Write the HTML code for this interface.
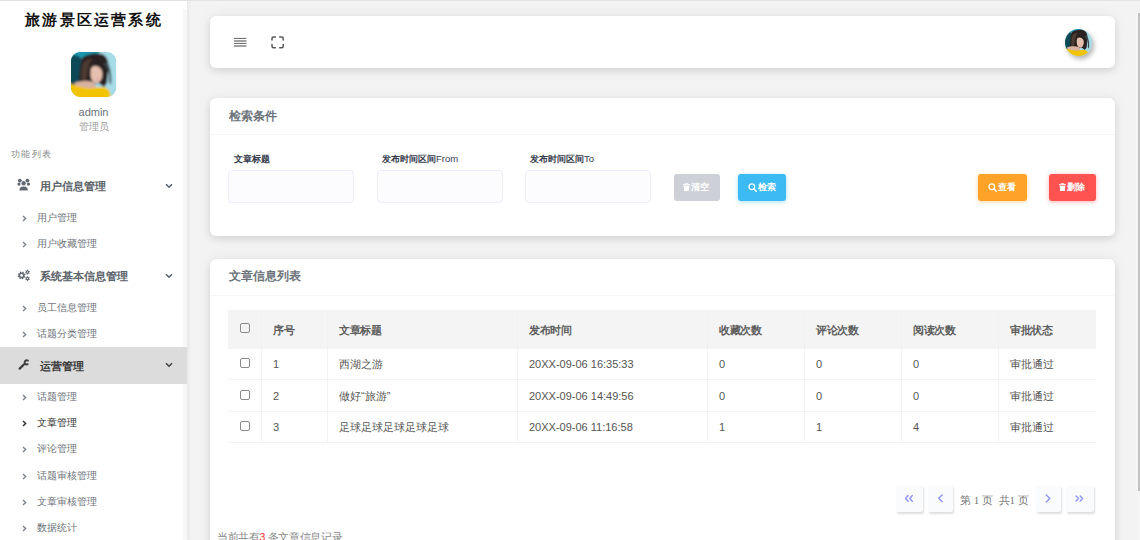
<!DOCTYPE html>
<html><head><meta charset="utf-8">
<style>
*{margin:0;padding:0;box-sizing:border-box}
html,body{width:1140px;height:540px;overflow:hidden}
body{font-family:"Liberation Sans",sans-serif;background:#f3f3f3;position:relative;color:#555}
.abs{position:absolute}
.topline{position:absolute;left:0;top:0;width:1140px;height:1px;background:#e3e3e3;z-index:10}
#side{position:absolute;left:0;top:0;width:187px;height:540px;background:#fff;box-shadow:1px 0 4px rgba(0,0,0,0.07);z-index:2}
#side .track{position:absolute;left:183px;top:9px;width:4px;height:531px;background:#f8f8f8}
.title{position:absolute;left:0;top:10px;width:187px;text-align:center;font-size:15px;font-weight:bold;color:#111;letter-spacing:2.2px;line-height:20px;padding-left:1px}
.avatar{position:absolute;left:71px;top:52px;width:45px;height:45px;border-radius:9px;overflow:hidden}
.uname{position:absolute;left:0;width:187px;text-align:center;top:104.5px;font-size:11px;color:#6c757d;line-height:14px}
.urole{position:absolute;left:0;width:187px;text-align:center;top:120px;font-size:9.6px;color:#9a9a9a;line-height:13px}
.flist{position:absolute;left:10.5px;top:148px;font-size:9px;color:#8a8a8a;letter-spacing:1.5px;line-height:12px}
.mt{position:absolute;left:0;width:187px;height:37px}
.mt.active{background:#dcdcdc}
.mt .ic{position:absolute;left:17px;top:12px;width:13px;height:13px}
.mt .tx{position:absolute;left:40px;top:0;line-height:37px;font-size:11px;font-weight:bold;color:#5c636a}
.mt .chev{position:absolute;left:165px;top:15px;width:8px;height:6px}
.si{position:absolute;left:0;width:187px;height:26px}
.si .ar{position:absolute;left:22px;top:10px;width:5px;height:7px}
.si .tx{position:absolute;left:37px;top:0;line-height:26px;font-size:10px;color:#6d7278}
.si.cur .tx{color:#2e2e2e;font-weight:500}
.card{position:absolute;left:209.5px;width:905.5px;background:#fff;border-radius:6px;box-shadow:0 3px 7px rgba(30,40,50,0.12),0 0 16px rgba(0,0,0,0.05)}
.ctitle{position:absolute;left:19px;font-size:12px;font-weight:bold;color:#6c737a;line-height:16px}
.divider{position:absolute;left:0;width:905px;height:1px;background:#f6f6f6}
.lbl{position:absolute;font-size:9px;font-weight:bold;color:#363c4c;line-height:12px}
.inp{position:absolute;top:170px;width:126px;height:33px;background:#fcfcff;border:1px solid #ececfb;border-radius:4px}
.btn{position:absolute;top:174px;height:27px;border-radius:3px;color:#fff;font-size:9px;font-weight:bold;white-space:nowrap}
.bt{position:absolute;top:0;line-height:27px;font-size:9.3px}
.scroll{position:absolute;left:1137px;top:12px;width:3px;height:528px;background:#f5f5f5}
.thumb{position:absolute;left:1138px;top:13px;width:2px;height:478px;background:#c1c1c1}
table{position:absolute;left:228px;top:310px;border-collapse:collapse;font-size:11px;color:#555}
th{background:#f4f4f4;height:38.5px;text-align:left;font-weight:bold;letter-spacing:-0.3px;padding:0 0 0 11px;border-left:1px solid #f1f1f1;color:#5e5e5e}
td{height:31.4px;padding:0 0 0 11px;border-left:1px solid #f2f2f2;border-bottom:1px solid #f2f2f2}
.c{position:relative;top:1px}
th:first-child,td:first-child{border-left:none}
.cb{display:inline-block;width:10px;height:10px;border:1px solid #8a8a8a;border-radius:2px;vertical-align:middle;position:relative;top:-2px;left:1px}
.pg{position:absolute;top:485.7px;width:26px;height:26px;background:#fafbfd;border-radius:2.5px;box-shadow:1px 1.5px 2px rgba(0,0,0,0.13)}
</style></head>
<body>
<div class="topline"></div>
<div id="side">
  <div class="track"></div>
  <div class="title">旅游景区运营系统</div>
  <div class="avatar">
    <svg width="45" height="45" viewBox="0 0 45 45">
      <defs><filter id="bl1" x="-10%" y="-10%" width="120%" height="120%"><feGaussianBlur stdDeviation="1.1"/></filter></defs>
      <rect width="45" height="45" fill="#a6dbe8"/>
      <g filter="url(#bl1)">
      <rect x="-2" y="-2" width="49" height="49" fill="#a6dbe8"/>
      <path d="M-2 -2 H30 L24 6 H-2Z" fill="#1f98ae"/>
      <path d="M-2 3 C4 2 10 4 13 10 C13 18 11 26 9 34 L-2 34 Z" fill="#0a4a57"/>
      <path d="M11 6 C15 2 24 0.5 31 2 C35 3.5 37.5 8 37.5 13 C37.5 19 36.5 25 36 31 L33 35 C31 33 29 32 27 31 L16 35 L8 33 C8 24 9 14 11 6 Z" fill="#2a2321"/>
      <path d="M12 12 C14 8 18 6 21 7 C17 12 16 20 15 30 L11 32 C10 24 10.5 16 12 12Z" fill="#4d3b32"/>
      <path d="M33 12 C37 16 39 22 38 30 L40 33 C41 24 40 16 36 10Z" fill="#3d4b52"/>
      <path d="M21 15 C24 13 29 14 31 19 C32 24 30.5 29 27 31 C24 32 21 29.5 20 25.5 C19 21 19.5 17 21 15Z" fill="#e6c0ae"/>
      <path d="M3 31 C8 29 16 28 23 30 L26 37 L6 38 Z" fill="#d8b2a0"/>
      <ellipse cx="26.5" cy="27.3" rx="1.5" ry="0.8" fill="#da8c95"/>
      <path d="M-2 31 C6 34 14 37 22 36 C28 35 34 34 38 38 L41 47 H-2 Z" fill="#f2c400"/>
      </g>
    </svg>
  </div>
  <div class="uname">admin</div>
  <div class="urole">管理员</div>
  <div class="flist">功能列表</div>

  <div class="mt" style="top:168px">
    <svg class="ic" style="left:17px;top:10px;width:14px;height:14px" viewBox="0 0 14 14"><g fill="#5f6770"><circle cx="2.9" cy="2.6" r="1.9"/><circle cx="10.4" cy="2.6" r="1.9"/><circle cx="2" cy="6.1" r="1.6"/><circle cx="11.5" cy="6.1" r="1.6"/><circle cx="6.65" cy="5.2" r="2.5" stroke="#fff" stroke-width="0.6"/><path d="M2.3 12.2 C2.3 9.5 3.5 8.3 6.65 8.3 C9.8 8.3 11 9.5 11 12.2 Q11 12.7 10.5 12.7 H2.8 Q2.3 12.7 2.3 12.2Z" stroke="#fff" stroke-width="0.5"/></g></svg>
    <div class="tx">用户信息管理</div>
    <svg class="chev" viewBox="0 0 8 6"><path d="M1 1.2 L4 4.2 L7 1.2" stroke="#59616a" stroke-width="1.6" fill="none"/></svg>
  </div>
  <div class="si" style="top:205px"><svg class="ar" viewBox="0 0 5 7"><path d="M1 1 L3.6 3.5 L1 6" stroke="#7b838c" stroke-width="1.4" fill="none"/></svg><div class="tx">用户管理</div></div>
  <div class="si" style="top:231px"><svg class="ar" viewBox="0 0 5 7"><path d="M1 1 L3.6 3.5 L1 6" stroke="#7b838c" stroke-width="1.4" fill="none"/></svg><div class="tx">用户收藏管理</div></div>

  <div class="mt" style="top:257.5px">
    <svg class="ic" style="left:17px;top:10px;width:14px;height:14px" viewBox="0 0 14 14"><path fill="#5f6770" fill-rule="evenodd" d="M7.54 8.00 L8.40 8.65 L7.92 9.63 L6.87 9.36 L6.26 9.90 L6.40 10.97 L5.37 11.33 L4.82 10.39 L4.00 10.34 L3.35 11.20 L2.37 10.72 L2.64 9.67 L2.10 9.06 L1.03 9.20 L0.67 8.17 L1.61 7.62 L1.66 6.80 L0.80 6.15 L1.28 5.17 L2.33 5.44 L2.94 4.90 L2.80 3.83 L3.83 3.47 L4.38 4.41 L5.20 4.46 L5.850 3.60 L6.83 4.08 L6.56 5.13 L7.10 5.74 L8.17 5.60 L8.53 6.63 L7.59 7.18Z M6.00 7.40 A1.4 1.4 0 1 0 3.20 7.40 A1.4 1.4 0 1 0 6.00 7.40Z M12.12 4.60 L12.65 5.16 L12.13 5.86 L11.45 5.51 L10.88 5.76 L10.66 6.49 L9.79 6.39 L9.75 5.63 L9.25 5.26 L8.51 5.44 L8.16 4.63 L8.80 4.21 L8.88 3.60 L8.35 3.04 L8.87 2.34 L9.55 2.69 L10.12 2.44 L10.34 1.71 L11.21 1.81 L11.25 2.57 L11.75 2.94 L12.49 2.76 L12.84 3.57 L12.20 3.99Z M11.20 4.10 A0.7 0.7 0 1 0 9.80 4.10 A0.7 0.7 0 1 0 11.20 4.10Z M12.19 10.77 L12.82 11.21 L12.45 12.00 L11.71 11.80 L11.20 12.15 L11.13 12.92 L10.26 12.99 L10.07 12.24 L9.51 11.98 L8.81 12.31 L8.31 11.59 L8.86 11.05 L8.81 10.43 L8.18 9.99 L8.55 9.20 L9.29 9.40 L9.80 9.05 L9.87 8.28 L10.74 8.21 L10.93 8.96 L11.49 9.22 L12.19 8.89 L12.69 9.61 L12.14 10.15Z M11.20 10.60 A0.7 0.7 0 1 0 9.80 10.60 A0.7 0.7 0 1 0 11.20 10.60Z"/></svg>
    <div class="tx">系统基本信息管理</div>
    <svg class="chev" viewBox="0 0 8 6"><path d="M1 1.2 L4 4.2 L7 1.2" stroke="#59616a" stroke-width="1.6" fill="none"/></svg>
  </div>
  <div class="si" style="top:294.5px"><svg class="ar" viewBox="0 0 5 7"><path d="M1 1 L3.6 3.5 L1 6" stroke="#7b838c" stroke-width="1.4" fill="none"/></svg><div class="tx">员工信息管理</div></div>
  <div class="si" style="top:320.7px"><svg class="ar" viewBox="0 0 5 7"><path d="M1 1 L3.6 3.5 L1 6" stroke="#7b838c" stroke-width="1.4" fill="none"/></svg><div class="tx">话题分类管理</div></div>

  <div class="mt active" style="top:347px">
    <svg class="ic" style="left:17px;top:10px;width:14px;height:14px" viewBox="0 0 14 14"><path d="M2.7 11.6 L6.9 7.5" stroke="#3d3d3d" stroke-width="2.3" stroke-linecap="round"/><path d="M10.9 3.6 A2.1 2.1 0 1 0 10.7 7.2" stroke="#3d3d3d" stroke-width="1.9" fill="none" stroke-linecap="round"/></svg>
    <div class="tx" style="color:#3a3a3a;top:1px">运营管理</div>
    <svg class="chev" viewBox="0 0 8 6"><path d="M1 1.2 L4 4.2 L7 1.2" stroke="#444" stroke-width="1.6" fill="none"/></svg>
  </div>
  <div class="si" style="top:384px"><svg class="ar" viewBox="0 0 5 7"><path d="M1 1 L3.6 3.5 L1 6" stroke="#7b838c" stroke-width="1.4" fill="none"/></svg><div class="tx">话题管理</div></div>
  <div class="si cur" style="top:410.2px"><svg class="ar" viewBox="0 0 5 7"><path d="M1 1 L3.6 3.5 L1 6" stroke="#333" stroke-width="1.5" fill="none"/></svg><div class="tx">文章管理</div></div>
  <div class="si" style="top:436.4px"><svg class="ar" viewBox="0 0 5 7"><path d="M1 1 L3.6 3.5 L1 6" stroke="#7b838c" stroke-width="1.4" fill="none"/></svg><div class="tx">评论管理</div></div>
  <div class="si" style="top:462.6px"><svg class="ar" viewBox="0 0 5 7"><path d="M1 1 L3.6 3.5 L1 6" stroke="#7b838c" stroke-width="1.4" fill="none"/></svg><div class="tx">话题审核管理</div></div>
  <div class="si" style="top:488.8px"><svg class="ar" viewBox="0 0 5 7"><path d="M1 1 L3.6 3.5 L1 6" stroke="#7b838c" stroke-width="1.4" fill="none"/></svg><div class="tx">文章审核管理</div></div>
  <div class="si" style="top:515px"><svg class="ar" viewBox="0 0 5 7"><path d="M1 1 L3.6 3.5 L1 6" stroke="#7b838c" stroke-width="1.4" fill="none"/></svg><div class="tx">数据统计</div></div>
</div>

<!-- header card -->
<div class="card" style="top:15.5px;height:52.5px">
  <svg class="abs" style="left:24.5px;top:21px" width="13" height="10" viewBox="0 0 13 10"><g fill="#666"><rect x="0" y="0.9" width="12.5" height="1"/><rect x="0" y="3.4" width="12.5" height="1.2"/><rect x="0" y="5.9" width="12.5" height="1"/><rect x="0" y="8.4" width="12.5" height="1.2"/></g></svg>
  <svg class="abs" style="left:61.5px;top:20px" width="14" height="13" viewBox="0 0 14 13"><g stroke="#555" stroke-width="1.5" fill="none" stroke-linecap="round"><path d="M4.3 1 H2.5 Q1 1 1 2.5 V4"/><path d="M8.7 1 H10.7 Q12.2 1 12.2 2.5 V4"/><path d="M1 8.5 V10 Q1 11.8 2.5 11.8 H4.3"/><path d="M12.2 8.5 V10 Q12.2 11.8 10.7 11.8 H8.7"/></g></svg>
  <div class="abs" style="left:855px;top:13px;width:27px;height:27px;border-radius:50%;overflow:hidden;box-shadow:2px 3px 5px rgba(0,0,0,0.3)">
    <svg width="27" height="27" viewBox="0 0 45 45">
      <defs><filter id="bl2" x="-10%" y="-10%" width="120%" height="120%"><feGaussianBlur stdDeviation="1.1"/></filter></defs>
      <rect width="45" height="45" fill="#a6dbe8"/>
      <g filter="url(#bl2)">
      <rect x="-2" y="-2" width="49" height="49" fill="#a6dbe8"/>
      <path d="M-2 -2 H30 L24 6 H-2Z" fill="#1f98ae"/>
      <path d="M-2 3 C4 2 10 4 13 10 C13 18 11 26 9 34 L-2 34 Z" fill="#0a4a57"/>
      <path d="M11 6 C15 2 24 0.5 31 2 C35 3.5 37.5 8 37.5 13 C37.5 19 36.5 25 36 31 L33 35 C31 33 29 32 27 31 L16 35 L8 33 C8 24 9 14 11 6 Z" fill="#2a2321"/>
      <path d="M12 12 C14 8 18 6 21 7 C17 12 16 20 15 30 L11 32 C10 24 10.5 16 12 12Z" fill="#4d3b32"/>
      <path d="M33 12 C37 16 39 22 38 30 L40 33 C41 24 40 16 36 10Z" fill="#3d4b52"/>
      <path d="M21 15 C24 13 29 14 31 19 C32 24 30.5 29 27 31 C24 32 21 29.5 20 25.5 C19 21 19.5 17 21 15Z" fill="#e6c0ae"/>
      <path d="M3 31 C8 29 16 28 23 30 L26 37 L6 38 Z" fill="#d8b2a0"/>
      <ellipse cx="26.5" cy="27.3" rx="1.5" ry="0.8" fill="#da8c95"/>
      <path d="M-2 31 C6 34 14 37 22 36 C28 35 34 34 38 38 L41 47 H-2 Z" fill="#f2c400"/>
      </g>
    </svg>
  </div>
</div>

<!-- search card -->
<div class="card" style="top:98px;height:138px">
  <div class="ctitle" style="top:10px">检索条件</div>
  <div class="divider" style="top:36px"></div>
</div>
<div class="lbl" style="left:234px;top:152.5px">文章标题</div>
<div class="lbl" style="left:382px;top:152.5px">发布时间区间<span style="font-weight:normal;font-size:9.5px">From</span></div>
<div class="lbl" style="left:530px;top:152.5px">发布时间区间<span style="font-weight:normal;font-size:9.5px">To</span></div>
<div class="inp" style="left:228px"></div>
<div class="inp" style="left:376.5px"></div>
<div class="inp" style="left:525px"></div>
<div class="btn" style="left:674px;width:46px;background:#cdd1d7"><svg class="abs" style="left:9.3px;top:9px" width="7" height="8" viewBox="0 0 7 8"><path d="M2.2 1.3 V0.4 H4.8 V1.3" stroke="#fff" stroke-width="0.8" fill="none"/><rect x="0" y="1.2" width="7" height="1" fill="#fff"/><path d="M0.7 2.7 H6.3 L5.9 8 H1.1 Z" fill="#fff"/></svg><span class="bt" style="left:17px">清空</span></div>
<div class="btn" style="left:738px;width:48px;background:#3cbaf3;box-shadow:0 1px 4px rgba(60,186,243,0.45)"><svg class="abs" style="left:10px;top:9px" width="9" height="9" viewBox="0 0 9 9"><circle cx="3.8" cy="3.8" r="2.85" stroke="#fff" stroke-width="1.3" fill="none"/><path d="M5.9 5.9 L8.2 8.2" stroke="#fff" stroke-width="1.5" stroke-linecap="round"/></svg><span class="bt" style="left:19.5px">检索</span></div>
<div class="btn" style="left:978px;width:49px;background:#ffa328;box-shadow:0 1px 4px rgba(255,163,40,0.45)"><svg class="abs" style="left:10.4px;top:9px" width="9" height="9" viewBox="0 0 9 9"><circle cx="3.8" cy="3.8" r="2.85" stroke="#fff" stroke-width="1.3" fill="none"/><path d="M5.9 5.9 L8.2 8.2" stroke="#fff" stroke-width="1.5" stroke-linecap="round"/></svg><span class="bt" style="left:19.7px">查看</span></div>
<div class="btn" style="left:1049px;width:47px;background:#ff5351;box-shadow:0 1px 4px rgba(255,83,81,0.45)"><svg class="abs" style="left:10.1px;top:9px" width="7" height="8" viewBox="0 0 7 8"><path d="M2.2 1.3 V0.4 H4.8 V1.3" stroke="#fff" stroke-width="0.8" fill="none"/><rect x="0" y="1.2" width="7" height="1" fill="#fff"/><path d="M0.7 2.7 H6.3 L5.9 8 H1.1 Z" fill="#fff"/></svg><span class="bt" style="left:17.9px">删除</span></div>

<!-- list card -->
<div class="card" style="top:259px;height:300px">
  <div class="ctitle" style="top:9px">文章信息列表</div>
  <div class="divider" style="top:35.5px"></div>
</div>
<table>
  <tr><th style="width:33.5px"><span class="cb"></span></th><th style="width:66px"><span class="c">序号</span></th><th style="width:190px"><span class="c">文章标题</span></th><th style="width:190px"><span class="c">发布时间</span></th><th style="width:97px"><span class="c">收藏次数</span></th><th style="width:97px"><span class="c">评论次数</span></th><th style="width:97px"><span class="c">阅读次数</span></th><th style="width:97px"><span class="c">审批状态</span></th></tr>
  <tr><td><span class="cb"></span></td><td>1</td><td><span class="c">西湖之游</span></td><td>20XX-09-06 16:35:33</td><td>0</td><td>0</td><td>0</td><td><span class="c">审批通过</span></td></tr>
  <tr><td><span class="cb"></span></td><td>2</td><td><span class="c">做好“旅游”</span></td><td>20XX-09-06 14:49:56</td><td>0</td><td>0</td><td>0</td><td><span class="c">审批通过</span></td></tr>
  <tr><td><span class="cb"></span></td><td>3</td><td><span class="c">足球足球足球足球足球</span></td><td>20XX-09-06 11:16:58</td><td>1</td><td>1</td><td>4</td><td><span class="c">审批通过</span></td></tr>
</table>

<div class="pg" style="left:896px;width:27px"><svg class="abs" style="left:0;top:0" width="27" height="26" viewBox="0 0 27 26"><path d="M12.1 9.6 L9.6 12.4 L12.1 15.2 M16.3 9.6 L13.8 12.4 L16.3 15.2" stroke="#9295f7" stroke-width="1.45" fill="none" stroke-linecap="round" stroke-linejoin="round"/></svg></div>
<div class="pg" style="left:927.6px;width:25px"><svg class="abs" style="left:0;top:0" width="25" height="26" viewBox="0 0 25 26"><path d="M14.2 9 L10.6 12.3 L14.2 15.6" stroke="#9295f7" stroke-width="1.45" fill="none" stroke-linecap="round" stroke-linejoin="round"/></svg></div>
<div class="abs" style="left:960px;top:491.5px;font-size:11px;color:#777;font-family:'Liberation Serif',serif;line-height:16px">第 1 页&nbsp; 共1 页</div>
<div class="pg" style="left:1036px;width:25px"><svg class="abs" style="left:0;top:0" width="25" height="26" viewBox="0 0 25 26"><path d="M10.3 9 L13.9 12.5 L10.3 16" stroke="#9295f7" stroke-width="1.45" fill="none" stroke-linecap="round" stroke-linejoin="round"/></svg></div>
<div class="pg" style="left:1066.2px;width:28px"><svg class="abs" style="left:0;top:0" width="28" height="26" viewBox="0 0 28 26"><path d="M10.1 10 L12.5 12.5 L10.1 15 M14.2 10 L16.6 12.5 L14.2 15" stroke="#9295f7" stroke-width="1.45" fill="none" stroke-linecap="round" stroke-linejoin="round"/></svg></div>
<div class="abs" style="left:217px;top:528.5px;font-size:10.5px;letter-spacing:-0.35px;color:#888;line-height:16px">当前共有<span style="color:#f33">3</span> 条文章信息记录</div>

<div class="scroll"></div>
<div class="thumb"></div>
</body></html>
